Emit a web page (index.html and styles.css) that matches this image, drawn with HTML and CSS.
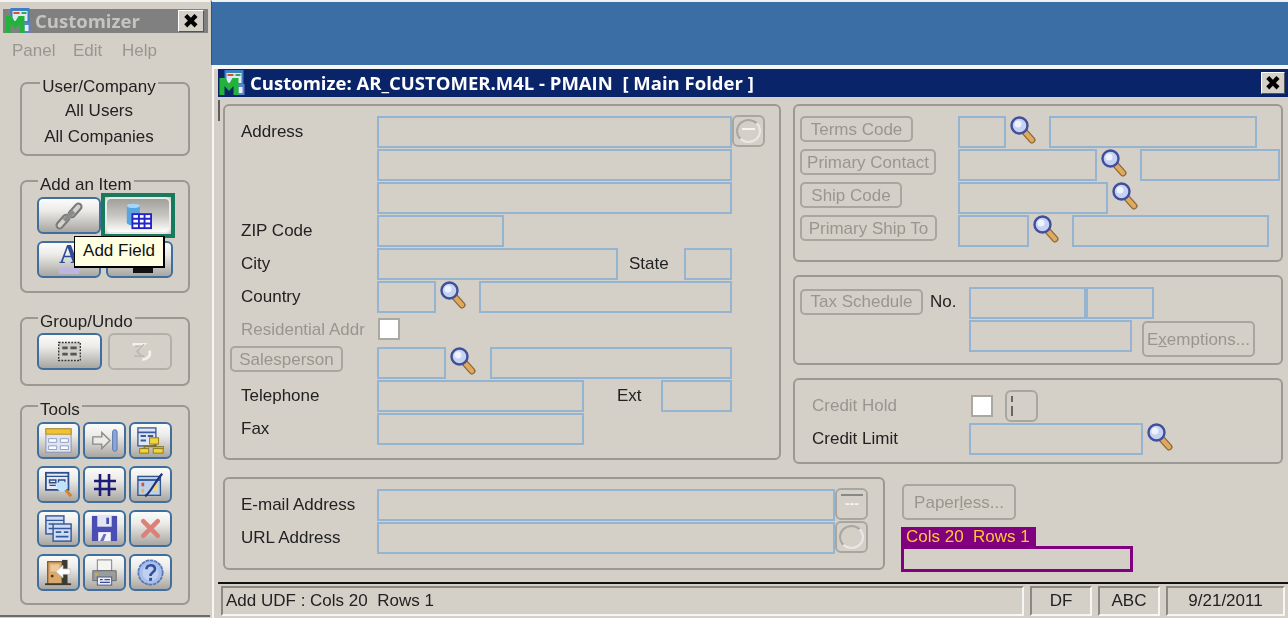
FILE: index.html
```html
<!DOCTYPE html>
<html lang="en">
<head>
<meta charset="utf-8">
<title>Customizer</title>
<link rel="stylesheet" href="styles.css">
</head>
<body>
<svg class="defs" width="0" height="0" aria-hidden="true">
  <symbol id="logo" viewBox="0 0 26 26">
    <rect x="5" y="0" width="19" height="16" fill="#3d7fc4"/>
    <rect x="7" y="3" width="15" height="10" fill="#dfe9f4"/>
    <rect x="8" y="4" width="6" height="2" fill="#d9541e"/>
    <rect x="16" y="4" width="5" height="2" fill="#3aa655"/>
    <rect x="17" y="14" width="8" height="11" fill="#5b84c8"/>
    <rect x="19" y="17" width="4" height="6" fill="#e8eef8"/>
    <path d="M0 25V8h6l3.500 6L13 8h6v17h-5v-9L9.500 21 5 16v9z" fill="#22b43a"/>
  </symbol>
  <symbol id="mag" viewBox="0 0 26 28">
    <path d="M14 15l8 9" stroke="#8a6a36" stroke-width="7" stroke-linecap="round"/>
    <path d="M14 15l8 9" stroke="#e0a860" stroke-width="4.400" stroke-linecap="round"/>
    <circle cx="9.500" cy="9.500" r="8" fill="#c6d2f2" stroke="#3f4f9c" stroke-width="2.400"/>
    <circle cx="8" cy="8" r="3.500" fill="#eef2ff"/>
  </symbol>
  <symbol id="chain" viewBox="0 0 30 30">
    <path d="M5 25L12 17M18 13L25 5" stroke="#7a7a7a" stroke-width="9" stroke-linecap="round"/>
    <path d="M5 25L12 17M18 13L25 5" stroke="#d2d2d0" stroke-width="4.500" stroke-linecap="round"/>
    <path d="M10 20L20 10" stroke="#8c8c8c" stroke-width="5"/>
  </symbol>
  <symbol id="field" viewBox="0 0 30 30">
    <path d="M3 4c0-4 14-4 14 0v18c0 4-14 4-14 0z" fill="#5aa4e0"/>
    <ellipse cx="10" cy="4" rx="7" ry="2.500" fill="#a9d4f4"/>
    <rect x="9" y="13" width="20" height="15" fill="#fff" stroke="#2424c8" stroke-width="2"/>
    <path d="M16 13v15M22 13v15M9 18h20M9 23h20" stroke="#2424c8" stroke-width="2"/>
  </symbol>
  <symbol id="group" viewBox="0 0 30 24">
    <rect x="3" y="2" width="24" height="20" fill="#cfcdc8" stroke="#333" stroke-width="1.500" stroke-dasharray="2 1.500"/>
    <path d="M7 8h6M16 8h7M7 15h6M16 15h7" stroke="#555" stroke-width="3"/>
  </symbol>
  <symbol id="undo" viewBox="0 0 30 26">
    <path d="M6 5h13l-5 5M25 12c2 6-3 10-8 10" fill="none" stroke="#f2f1ee" stroke-width="3"/>
    <path d="M8 18h11M9 7h8" stroke="#a9a7a2" stroke-width="1"/>
    <path d="M19 5l-8 8 5 5" fill="none" stroke="#bdbbb6" stroke-width="2"/>
  </symbol>
  <symbol id="form" viewBox="0 0 30 30">
    <rect x="1" y="2" width="28" height="26" fill="#dfe4f2" stroke="#7f8db8"/>
    <rect x="1" y="2" width="28" height="6" fill="#f1c232" stroke="#b08a1c"/>
    <path d="M4 13h9v4H4zM17 13h9v4h-9zM4 21h9v4H4zM17 21h9v4h-9z" fill="#fff" stroke="#8a97c0"/>
  </symbol>
  <symbol id="tab" viewBox="0 0 30 26">
    <path d="M2 9h10V4l9 9-9 9v-5H2z" fill="#ecebe8" stroke="#8a8a8a" stroke-width="1.500"/>
    <rect x="24" y="1" width="5" height="24" rx="2.500" fill="#8aa6d8" stroke="#5672aa"/>
  </symbol>
  <symbol id="tree" viewBox="0 0 30 30">
    <rect x="1" y="1" width="20" height="20" fill="#dfe6f4" stroke="#3e5a98" stroke-width="1.500"/>
    <path d="M1 6h20M4 10h6M12 10h6M4 15h6" stroke="#3e5a98" stroke-width="2"/>
    <path d="M19 18v4M8 25v-3h22v3" fill="none" stroke="#7b6a14" stroke-width="1.200"/>
    <rect x="14" y="12" width="10" height="7" fill="#f3d43a" stroke="#8a7414"/>
    <rect x="3" y="24" width="10" height="5" fill="#f3d43a" stroke="#8a7414"/>
    <rect x="18" y="24" width="11" height="5" fill="#f3d43a" stroke="#8a7414"/>
  </symbol>
  <symbol id="find" viewBox="0 0 30 30">
    <rect x="1" y="2" width="25" height="19" fill="#e6eaf4" stroke="#2d4f8c" stroke-width="2"/>
    <path d="M1 6h25M5 10h7v3H5zM15 10h7v3h-7zM5 16h7" fill="none" stroke="#2d4f8c" stroke-width="1.600"/>
    <circle cx="19" cy="17" r="6" fill="#bfe3fb"/>
    <path d="M23 21l6 7" stroke="#d9822c" stroke-width="3.500"/>
  </symbol>
  <symbol id="grid" viewBox="0 0 24 24">
    <path d="M7 1v22M16 1v22M1 8h22M1 16h22" stroke="#1c1c78" stroke-width="2.600"/>
  </symbol>
  <symbol id="props" viewBox="0 0 30 30">
    <rect x="1" y="6" width="25" height="21" fill="#bcd2ec" stroke="#33548e" stroke-width="1.500"/>
    <path d="M1 10h25" stroke="#33548e" stroke-width="2"/>
    <rect x="5" y="13" width="3" height="4" fill="#d8503c"/>
    <rect x="5" y="20" width="3" height="4" fill="#e5b93a"/>
    <rect x="18" y="14" width="5" height="8" fill="#f0d67a"/>
    <path d="M9 28C15 24 20 12 28 3" fill="none" stroke="#20307c" stroke-width="2.500"/>
  </symbol>
  <symbol id="forms" viewBox="0 0 30 30">
    <rect x="1" y="1" width="20" height="20" fill="#cfdcf2" stroke="#34589a" stroke-width="1.600"/>
    <path d="M1 6h20M4 10h5M4 15h5" stroke="#34589a" stroke-width="1.600"/>
    <rect x="9" y="10" width="20" height="19" fill="#cfdcf2" stroke="#34589a" stroke-width="1.600"/>
    <path d="M9 15h20M12 19h6M21 19h5M12 24h14" stroke="#34589a" stroke-width="1.800"/>
  </symbol>
  <symbol id="save" viewBox="0 0 30 30">
    <path d="M1 1h28v28H1z" fill="#4a4eb4"/>
    <rect x="7" y="1" width="16" height="12" fill="#e2e4f4"/>
    <rect x="17" y="3" width="3" height="7" fill="#4a4eb4"/>
    <path d="M8 29V19h14v10z" fill="#f4f4fa"/>
    <path d="M10 29l4-8h3l-3 8z" fill="#6a6ec4"/>
  </symbol>
  <symbol id="del" viewBox="0 0 24 24">
    <path d="M5 5l14 14M19 5L5 19" stroke="#dd8178" stroke-width="4.500" stroke-linecap="round"/>
  </symbol>
  <symbol id="exit" viewBox="0 0 30 30">
    <rect x="3" y="3" width="16" height="25" fill="#d9a86a" stroke="#8a5a28" stroke-width="1.500"/>
    <rect x="6" y="6" width="10" height="8" fill="#ecc998"/>
    <circle cx="8" cy="19" r="1.600" fill="#5a3414"/>
    <rect x="19" y="1" width="6" height="27" fill="#3a3a32"/>
    <rect x="0" y="27" width="29" height="2" fill="#3a3a32"/>
    <path d="M28 11h-8V7l-8 7 8 7v-4h8z" fill="#fff" stroke="#b9b9b9" stroke-width=".8"/>
  </symbol>
  <symbol id="print" viewBox="0 0 30 30">
    <rect x="7" y="1" width="16" height="12" fill="#f4f4f2" stroke="#777"/>
    <path d="M2 13h26v11H2z" fill="#9a9d9c" stroke="#666"/>
    <circle cx="6" cy="17" r="1.300" fill="#e3b23c"/>
    <rect x="7" y="20" width="16" height="9" fill="#e8ecf6" stroke="#4a4f78"/>
    <path d="M10 23h3M15 23h6M10 26h11" stroke="#3a4f98" stroke-width="1.300"/>
  </symbol>
  <symbol id="help" viewBox="0 0 30 30">
    <circle cx="15" cy="15" r="13.500" fill="#a8bfe8" stroke="#5578bc" stroke-width="2" stroke-dasharray="4 .8"/>
    <circle cx="15" cy="15" r="9" fill="#bfd0f0"/>
    <path d="M10.500 11.500c0-6 9.500-6 9.500-.5 0 4-5 3.500-5 8" fill="none" stroke="#34509c" stroke-width="3"/>
    <rect x="13.500" y="21" width="3.200" height="3.200" fill="#34509c"/>
  </symbol>
</svg>

<div class="app">
  <aside class="panel">
    <div class="ptitle">
      <svg class="logo"><use href="#logo"/></svg>
      <span class="ptitle-text">Customizer</span>
      <span class="close">✖</span>
    </div>
    <nav class="menu"><span>Panel</span><span>Edit</span><span>Help</span></nav>

    <section class="pg pg-user">
      <div class="pg-leg pg-leg-user">User/Company</div>
      <div class="pg-line">All Users</div>
      <div class="pg-line">All Companies</div>
    </section>

    <section class="pg pg-add">
      <div class="pg-leg">Add an Item</div>
      <div class="brow">
        <button class="tb w64"><svg class="ic28"><use href="#chain"/></svg></button>
        <div class="selbox">
          <button class="tb w66 on"><svg class="ic28"><use href="#field"/></svg></button>
        </div>
      </div>
      <div class="brow brow2">
        <button class="tb w65"><span class="aglyph">A</span></button>
        <button class="tb w68"><span class="blk"></span></button>
      </div>
      <div class="tip">Add Field</div>
    </section>

    <section class="pg pg-undo">
      <div class="pg-leg">Group/Undo</div>
      <div class="brow brow-undo">
        <button class="tb w65"><svg class="ic26"><use href="#group"/></svg></button>
        <button class="tb w64 off"><svg class="ic26"><use href="#undo"/></svg></button>
      </div>
    </section>

    <section class="pg pg-tools">
      <div class="pg-leg">Tools</div>
      <div class="tgrid">
        <button class="tb"><svg class="ic26"><use href="#form"/></svg></button>
        <button class="tb"><svg class="ic26"><use href="#tab"/></svg></button>
        <button class="tb"><svg class="ic26"><use href="#tree"/></svg></button>
        <button class="tb"><svg class="ic26"><use href="#find"/></svg></button>
        <button class="tb"><svg class="ic22"><use href="#grid"/></svg></button>
        <button class="tb"><svg class="ic26"><use href="#props"/></svg></button>
        <button class="tb"><svg class="ic26"><use href="#forms"/></svg></button>
        <button class="tb"><svg class="ic26"><use href="#save"/></svg></button>
        <button class="tb"><svg class="ic24"><use href="#del"/></svg></button>
        <button class="tb"><svg class="ic26"><use href="#exit"/></svg></button>
        <button class="tb"><svg class="ic26"><use href="#print"/></svg></button>
        <button class="tb"><svg class="ic26"><use href="#help"/></svg></button>
      </div>
    </section>
  </aside>

  <main class="desk">
    <div class="blue"></div>
    <div class="win">
      <header class="wtitle">
        <svg class="logo"><use href="#logo"/></svg>
        <span class="wtitle-text">Customize: AR_CUSTOMER.M4L - PMAIN&nbsp; [ Main Folder ]</span>
        <span class="close wclose">✖</span>
      </header>

      <div class="wbody">
        <div class="top">
          <section class="g g1">
            <div class="row"><span class="lab">Address</span><span class="f w355"></span><span class="sq"><i class="sq-ring"></i><i class="sq-dash"></i></span></div>
            <div class="row"><span class="lab"></span><span class="f w355"></span></div>
            <div class="row"><span class="lab"></span><span class="f w355"></span></div>
            <div class="row"><span class="lab">ZIP Code</span><span class="f w127"></span></div>
            <div class="row"><span class="lab">City</span><span class="f w241"></span><span class="inl w55">State</span><span class="f w48"></span></div>
            <div class="row"><span class="lab">Country</span><span class="f w59"></span><svg class="mag"><use href="#mag"/></svg><span class="f w253"></span></div>
            <div class="row"><span class="lab dim">Residential Addr</span><span class="chk ml1"></span></div>
            <div class="row"><span class="lab lab-b"><span class="fb w113">Salesperson</span></span><span class="f w69"></span><svg class="mag"><use href="#mag"/></svg><span class="f w242 ml1"></span></div>
            <div class="row"><span class="lab">Telephone</span><span class="f w207"></span><span class="inl inl-ext">Ext</span><span class="f w71"></span></div>
            <div class="row"><span class="lab">Fax</span><span class="f w207"></span></div>
          </section>

          <div class="rcol">
            <section class="g g2">
              <div class="row"><span class="lab2"><span class="fb w113">Terms Code</span></span><span class="f w48"></span><svg class="mag"><use href="#mag"/></svg><span class="f w208"></span></div>
              <div class="row"><span class="lab2"><span class="fb w136">Primary Contact</span></span><span class="f w139"></span><svg class="mag"><use href="#mag"/></svg><span class="f w140"></span></div>
              <div class="row"><span class="lab2"><span class="fb w102">Ship Code</span></span><span class="f w150"></span><svg class="mag"><use href="#mag"/></svg></div>
              <div class="row"><span class="lab2"><span class="fb w137">Primary Ship To</span></span><span class="f w71"></span><svg class="mag"><use href="#mag"/></svg><span class="f w197"></span></div>
            </section>
            <section class="g g3">
              <div class="row"><span class="lab3 tax"><span class="fb w123">Tax Schedule</span><span class="no">No.</span></span><span class="f w117"></span><span class="f w68"></span></div>
              <div class="row"><span class="lab3"></span><span class="f w163"></span><span class="fb w113 tall">E<u>x</u>emptions...</span></div>
            </section>
            <section class="g g4">
              <div class="row"><span class="lab3 lab3-in dim">Credit Hold</span><span class="chk ml2"></span><span class="sq ml12 sq-flat"><i class="sq-tick"></i></span></div>
              <div class="row"><span class="lab3 lab3-in">Credit Limit</span><span class="f w174"></span><svg class="mag"><use href="#mag"/></svg></div>
            </section>
          </div>
        </div>

        <div class="bottom">
          <section class="g g5">
            <div class="row"><span class="lab">E-mail Address</span><span class="f w458"></span><span class="sq"><i class="sq-more">---</i></span></div>
            <div class="row"><span class="lab">URL Address</span><span class="f w458"></span><span class="sq"><i class="sq-ring"></i></span></div>
          </section>
          <div class="side">
            <span class="fb w114 paper">Paper<u>l</u>ess...</span>
            <div class="tag">Cols 20&nbsp; Rows 1</div>
            <div class="tagbox"></div>
          </div>
        </div>

        <footer class="status">
          <span class="cell c-main">Add UDF : Cols 20&nbsp; Rows 1</span>
          <span class="cell c-df">DF</span>
          <span class="cell c-abc">ABC</span>
          <span class="cell c-date">9/21/2011</span>
        </footer>
      </div>
    </div>
  </main>
</div>
</body>
</html>
```
FILE: styles.css
```css
* { box-sizing: border-box; }
html, body { margin: 0; height: 618px; overflow: hidden; background: #d4d0c8; }
body { font: 17px/1.1 "Liberation Sans", Arial, sans-serif; color: #222; }
.defs { position: absolute; }
.app { display: flex; height: 618px; width: 1288px; filter: blur(.4px); }

/* left tool panel */
.panel { width: 210px; height: 617px; flex: none; background: #d4d0c8; border-top: 2px solid #f4f3f0; border-bottom: 2px solid #6b6b6b; }
.ptitle { display: flex; align-items: center; height: 24px; margin: 7px 2px 0 3px; background: #808080; }
.logo { width: 27px; height: 26px; flex: none; margin-left: 2px; }
.ptitle-text, .wtitle-text { font: 700 18.500px/1 "Open Sans", sans-serif; }
.ptitle-text { color: #c6c4c0; margin-left: 3px; flex: 1; }
.close { display: flex; align-items: center; justify-content: center; width: 26px; height: 22px; background: #d4d0c8; color: #000; font: 700 20px/1 "DejaVu Sans", sans-serif; border: 1px solid; border-color: #fff #555 #555 #fff; margin-right: 4px; }
.menu { display: flex; height: 37px; align-items: center; padding-left: 12px; color: #999690; }
.menu span:nth-child(1) { width: 61px; }
.menu span:nth-child(2) { width: 49px; }

.pg { position: relative; width: 170px; margin: 0 0 24px 20px; border: 2px solid #9b9993; border-radius: 7px; padding: 0 15px; }
.pg-leg { width: fit-content; height: 20px; margin: -7px 0 0 1px; padding: 0 2px; background: linear-gradient(transparent 4px, #d4d0c8 4px); line-height: 20px; }
.pg-user { height: 74px; margin-top: 12px; padding: 0 12px 0 0; text-align: center; }
.pg-leg-user { margin: -7px auto 1px; }
.pg-line { line-height: 26px; }
.pg-add { height: 113px; }
.pg-undo { height: 69px; margin-bottom: 19px; }
.pg-tools { height: 200px; }
.brow { display: flex; gap: 4px; margin-top: 2px; }
.brow2 { gap: 5px; margin-top: 7px; }
.brow-undo { gap: 6px; margin-top: 1px; }
.selbox { display: flex; margin: -4px; border: 4px solid #187a5c; }
.tgrid { display: grid; grid-template-columns: repeat(3, 43px); grid-auto-rows: 37px; gap: 7px 3px; margin-top: 2px; }

.tb { display: flex; align-items: center; justify-content: center; height: 37px; padding: 0; border: 2px solid #3f6f9e; border-radius: 6px; background: linear-gradient(#fbfbfa 0, #ecebe8 35%, #a9a6a1 100%); }
.tb.on { border-color: #e9e9e6; background: linear-gradient(#a29f9a, #c8c6c2 50%, #fdfdfc); }
.tb.off { background: #d4d0c8; border-color: #b2b0aa; }
.w64 { width: 64px; } .w65 { width: 65px; } .w66 { width: 66px; } .w68 { width: 68px; }
.ic28 { width: 28px; height: 28px; }
.ic26 { width: 27px; height: 27px; }
.ic24 { width: 25px; height: 25px; }
.ic22 { width: 24px; height: 24px; }
.aglyph { margin-top: -4px; color: #2b4c96; font: 700 27px/1 "Liberation Serif", serif; border-bottom: 6px solid #bdb6e0; }
.blk { width: 20px; height: 5px; margin: 22px 0 0 6px; background: #111; }
.tip { position: absolute; left: 52px; top: 54px; width: 91px; height: 32px; background: #ffffe1; border: 1px solid #000; border-right-width: 2px; border-bottom-width: 2px; color: #111; display: flex; align-items: center; justify-content: center; }

/* main area */
.desk { flex: 1; min-width: 0; padding-left: 2px; }
.blue { height: 65px; margin-left: -1px; background: #3a6ea5; border-top: 2px solid #f2f2f0; border-left: 1px solid #2c5688; }
.win { height: 553px; border-top: 4px solid #f6f6f4; border-left: 2px solid #f6f6f4; padding-left: 4px; }
.wtitle { display: flex; align-items: center; height: 28px; background: #0a246a; }
.wtitle .logo { margin-left: 1px; }
.wtitle-text { color: #fff; margin-left: 4px; flex: 1; }
.wclose { width: 24px; margin-right: 3px; }
.wbody { position: relative; padding: 7px 0 0 5px; }
.wbody::before { content: ""; position: absolute; left: 0; top: 3px; width: 2px; height: 21px; background: #5e5e5e; }
.top { display: flex; gap: 12px; }
.g { border: 2px solid #9b9993; border-radius: 6px; padding-top: 10px; }
.g1 { width: 558px; height: 356px; }
.rcol { width: 490px; display: flex; flex-direction: column; gap: 13px; }
.g2 { height: 158px; }
.g3 { height: 90px; }
.g4 { height: 86px; }
.bottom { display: flex; height: 93px; margin-top: 13px; }
.g5 { width: 662px; height: 93px; }
.row { display: flex; align-items: center; height: 33px; }
.lab { flex: none; width: 152px; padding-left: 16px; white-space: nowrap; }
.lab-b { align-self: flex-start; margin-top: -1px; padding-left: 5px; }
.lab2 { flex: none; align-self: flex-start; width: 163px; padding-left: 5px; }
.lab3 { flex: none; display: flex; align-items: center; width: 174px; padding-left: 5px; }
.tax { margin-top: -4px; }
.no { margin: 2px 0 0 7px; }
.lab3-in { padding-left: 17px; }
.dim { color: #99968f; }
.f { flex: none; align-self: flex-start; height: 32px; border: 2px solid #94b4d2; }
.w48 { width: 48px; } .w59 { width: 59px; } .w69 { width: 69px; } .w71 { width: 71px; }
.w117 { width: 117px; } .w127 { width: 127px; } .w139 { width: 139px; } .w140 { width: 140px; } .w150 { width: 150px; }
.w163 { width: 163px; } .w174 { width: 174px; } .w197 { width: 197px; } .w207 { width: 207px; } .w208 { width: 208px; }
.w241 { width: 241px; } .w242 { width: 242px; } .w253 { width: 253px; } .w355 { width: 355px; } .w458 { width: 458px; }
.mag { flex: none; align-self: flex-start; width: 26px; height: 28px; margin: 0 13px 0 4px; }
.inl { flex: none; padding-left: 11px; }
.w55 { width: 66px; }
.inl-ext { width: 77px; padding-left: 33px; }
.chk { flex: none; align-self: flex-start; width: 22px; height: 22px; margin-top: 4px; background: #fff; border: 2px solid #aaa8a2; }
.ml1 { margin-left: 1px; } .ml2 { margin-left: 2px; margin-top: 5px; } .ml12 { margin-left: 12px; }
.fb { flex: none; display: inline-flex; align-items: center; justify-content: center; height: 26px; padding-top: 2px; border: 2px solid #a8a6a0; border-radius: 5px; color: #99968f; white-space: nowrap; }
.w102 { width: 102px; } .w113 { width: 113px; } .w114 { width: 114px; } .w123 { width: 123px; } .w136 { width: 136px; } .w137 { width: 137px; }
.tall { align-self: flex-start; height: 36px; margin: 1px 0 0 10px; }
.sq { position: relative; flex: none; align-self: flex-start; width: 33px; height: 32px; margin-top: -1px; border: 2px solid #a8a6a0; border-radius: 6px; }
.sq-flat { margin-top: 0; }
.sq-dash { position: absolute; left: 8px; top: 11px; width: 13px; height: 2px; background: #f4f4f2; }
.sq-tick { position: absolute; left: 4px; top: 4px; width: 2px; height: 20px; background: linear-gradient(#666 30%, transparent 30%, transparent 50%, #666 50%); }
.sq-more { position: absolute; left: 4px; top: 4px; right: 3px; border-top: 2px solid #888; color: #f4f4f2; font: 700 14px/14px "Liberation Sans", sans-serif; text-align: center; }
.sq-ring { position: absolute; inset: 2px; border: 2px solid #e9e8e4; border-top-color: #a9a7a1; border-left-color: #a9a7a1; border-radius: 50%; }

.side { display: flex; flex-direction: column; align-items: flex-start; margin-left: 16px; padding-top: 7px; }
.paper { flex: none; height: 36px; margin-left: 1px; }
.tag { flex: none; margin-top: 7px; height: 19px; width: 135px; background: #800080; color: #ffc832; line-height: 19px; padding-left: 5px; white-space: nowrap; }
.tagbox { flex: none; width: 232px; height: 26px; border: 3px solid #800080; }

.status { display: flex; align-items: center; height: 36px; margin: 12px 0 0 -5px; border-top: 2px solid #111; padding-left: 3px; background: #d4d0c8; }
.cell { flex: none; display: flex; align-items: center; justify-content: center; height: 30px; margin-right: 6px; border: 2px solid; border-color: #8a8883 #f6f6f4 #f6f6f4 #8a8883; }
.c-main { width: 803px; justify-content: flex-start; padding-left: 3px; }
.c-df { width: 62px; } .c-abc { width: 62px; } .c-date { width: 119px; margin-right: 0; }
```
